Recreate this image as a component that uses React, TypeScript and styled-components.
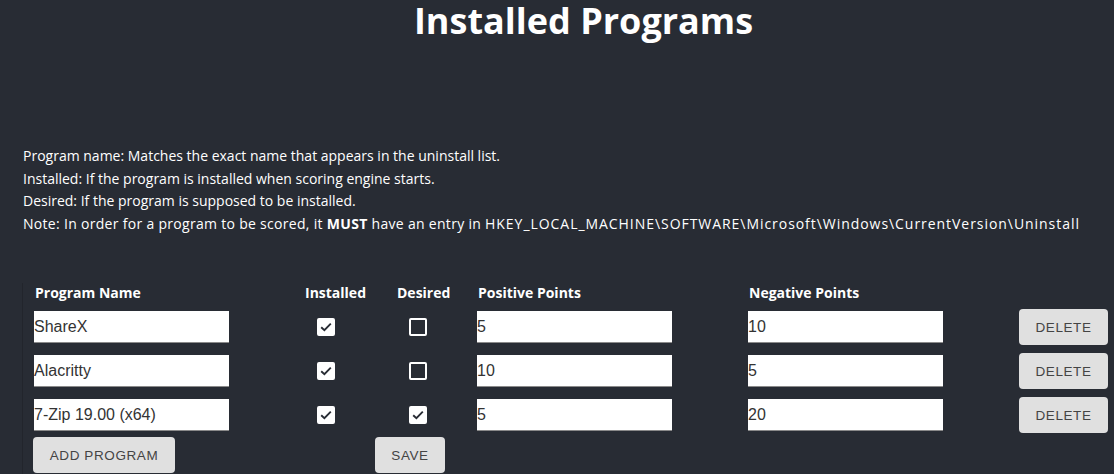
import React, { useState } from "react";
import styled, { createGlobalStyle } from "styled-components";

const Global = createGlobalStyle`
  html, body { margin: 0; padding: 0; background: #282c34; }
  body { font-family: "Open Sans", "Noto Sans", sans-serif; color: #fff; overflow: hidden; }
`;

const Page = styled.div`
  width: 1114px;
  height: 474px;
  background: #282c34;
  display: flex;
  flex-direction: column;
  overflow: hidden;
`;

const Title = styled.h1`
  margin: 0;
  padding: 0 0 0 53px;
  text-align: center;
  font-size: 36px;
  font-weight: 700;
  line-height: 42px;
`;

const Notes = styled.div`
  margin-top: 103px;
  padding-left: 23px;
  font-size: 14px;
  line-height: 22.5px;
`;

const Line = styled.div<{ $spread?: boolean }>`
  white-space: nowrap;
  letter-spacing: ${(p) => (p.$spread ? "0.3px" : "0")};
`;

const RegPath = styled.span`
  letter-spacing: 0.95px;
`;

const Table = styled.div`
  margin-top: 48px;
  margin-left: 22px;
  padding-left: 11px;
  border-left: 1px solid #22252c;
  flex: 1;
  display: grid;
  grid-template-columns: 270px 92px 81px 271px 271px 90px;
  grid-template-rows: 22px repeat(3, 44px) auto;
  align-items: center;
`;

const HeadRow = styled.div`
  display: contents;
`;

const Head = styled.div`
  font-size: 14px;
  font-weight: 700;
  align-self: start;
  line-height: 19px;
  padding-left: 1px;
`;

const Row = styled.div`
  display: contents;
`;

const TextInput = styled.input`
  box-sizing: border-box;
  width: 195px;
  height: 32px;
  margin: 0;
  padding: 0;
  border: none;
  border-bottom: 1px solid #8a8a8a;
  background: #fff;
  font-family: "Liberation Sans", Arial, sans-serif;
  font-size: 16px;
  color: #333;
  outline: none;
`;

const CheckCell = styled.div`
  padding-left: 13px;
  display: flex;
  align-items: center;
`;

const Box = styled.button<{ $on: boolean }>`
  box-sizing: border-box;
  width: 18px;
  height: 18px;
  padding: 0;
  border-radius: 2px;
  border: 2px solid #fff;
  background: ${(p) => (p.$on ? "#fff" : "transparent")};
  display: flex;
  align-items: center;
  justify-content: center;
  cursor: pointer;
`;

const Btn = styled.button`
  box-sizing: border-box;
  height: 36px;
  padding: 0 15px;
  border: none;
  border-radius: 4px;
  background: #e0e0e0;
  color: #444;
  font-family: "Liberation Sans", Arial, sans-serif;
  font-size: 13.5px;
  letter-spacing: 0.6px;
  text-transform: uppercase;
  cursor: pointer;
`;

const DeleteBtn = styled(Btn)`
  width: 89px;
  padding: 0;
`;

const Footer = styled.div`
  grid-column: 1 / -1;
  display: grid;
  grid-template-columns: 342px auto;
  align-self: start;
`;

const AddBtn = styled(Btn)`
  width: 142px;
  margin-left: -1px;
  justify-self: start;
`;

const SaveBtn = styled(Btn)`
  width: 70px;
  margin-left: -1px;
  justify-self: start;
`;

const Check = ({ on, onClick }: { on: boolean; onClick: () => void }) => (
  <Box $on={on} onClick={onClick}>
    {on && (
      <svg width="14" height="14" viewBox="0 0 14 14">
        <path d="M2.2 7.2 L5.4 10.2 L11.8 3.6" fill="none" stroke="#282c34" strokeWidth="1.9" />
      </svg>
    )}
  </Box>
);

type Prog = { name: string; installed: boolean; desired: boolean; pos: string; neg: string };

export default function App() {
  const [progs, setProgs] = useState<Prog[]>([
    { name: "ShareX", installed: true, desired: false, pos: "5", neg: "10" },
    { name: "Alacritty", installed: true, desired: false, pos: "10", neg: "5" },
    { name: "7-Zip 19.00 (x64)", installed: true, desired: true, pos: "5", neg: "20" },
  ]);
  const upd = (i: number, patch: Partial<Prog>) =>
    setProgs((ps) => ps.map((p, j) => (j === i ? { ...p, ...patch } : p)));

  return (
    <Page>
      <Global />
      <Title>Installed Programs</Title>
      <Notes>
        <Line>Program name: Matches the exact name that appears in the uninstall list.</Line>
        <Line>Installed: If the program is installed when scoring engine starts.</Line>
        <Line>Desired: If the program is supposed to be installed.</Line>
        <Line $spread>
          Note: In order for a program to be scored, it <b>MUST</b> have an entry in{" "}
          <RegPath>HKEY_LOCAL_MACHINE\SOFTWARE\Microsoft\Windows\CurrentVersion\Uninstall</RegPath>
        </Line>
      </Notes>
      <Table>
        <HeadRow>
          <Head>Program Name</Head>
          <Head>Installed</Head>
          <Head>Desired</Head>
          <Head>Positive Points</Head>
          <Head>Negative Points</Head>
          <Head />
        </HeadRow>
        {progs.map((p, i) => (
          <Row key={i}>
            <TextInput value={p.name} onChange={(e) => upd(i, { name: e.target.value })} />
            <CheckCell>
              <Check on={p.installed} onClick={() => upd(i, { installed: !p.installed })} />
            </CheckCell>
            <CheckCell>
              <Check on={p.desired} onClick={() => upd(i, { desired: !p.desired })} />
            </CheckCell>
            <TextInput value={p.pos} onChange={(e) => upd(i, { pos: e.target.value })} />
            <TextInput value={p.neg} onChange={(e) => upd(i, { neg: e.target.value })} />
            <DeleteBtn onClick={() => setProgs((ps) => ps.filter((_, j) => j !== i))}>Delete</DeleteBtn>
          </Row>
        ))}
        <Footer>
          <AddBtn
            onClick={() =>
              setProgs((ps) => [...ps, { name: "", installed: false, desired: false, pos: "", neg: "" }])
            }
          >
            Add Program
          </AddBtn>
          <SaveBtn>Save</SaveBtn>
        </Footer>
      </Table>
    </Page>
  );
}
